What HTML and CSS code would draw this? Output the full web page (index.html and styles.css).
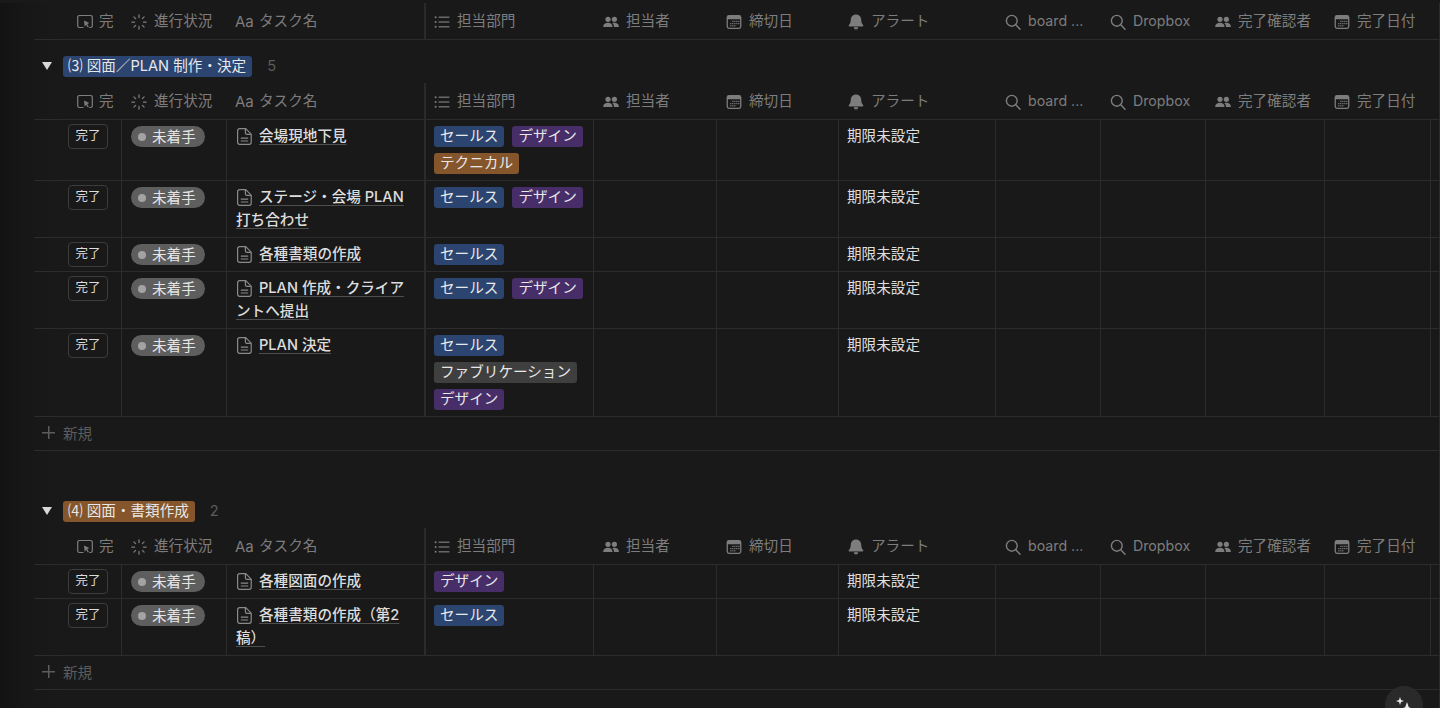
FILE: index.html
```html
<!DOCTYPE html>
<html lang="ja">
<head>
<meta charset="utf-8">
<title>タスク</title>
<link rel="stylesheet" href="styles.css">
</head>
<body>
<svg class="defs" width="0" height="0" aria-hidden="true">
  <symbol id="i-button" viewBox="0 0 16 16"><path d="M6.500 13.500H2.400A1.700 1.700 0 0 1 .7 11.800V3.200a1.700 1.700 0 0 1 1.700-1.700h11.200a1.700 1.700 0 0 1 1.700 1.700v8.600a1.700 1.700 0 0 1-1.700 1.700h-1.400" fill="none" stroke="currentColor" stroke-width="1.200"/><path d="M7 6.600l5.400 2.400-2.200 1 1.700 2.700-1.100.8-1.700-2.700-1.400 2z" fill="currentColor"/></symbol>
  <symbol id="i-status" viewBox="0 0 16 16"><g stroke="currentColor" stroke-width="1.250" stroke-linecap="round"><path d="M8 .8v2.800M8 12.400v2.800M.8 8h2.800M12.400 8h2.800M2.900 2.900l1.700 1.700M11.400 11.400l1.700 1.700M2.900 13.100l1.700-1.700M11.400 4.600l1.700-1.700"/></g></symbol>
  <symbol id="i-list" viewBox="0 0 16 16"><g fill="currentColor"><circle cx="1.600" cy="3.200" r="1"/><circle cx="1.600" cy="8" r="1"/><circle cx="1.600" cy="12.800" r="1"/><rect x="4.600" y="2.600" width="10.800" height="1.200"/><rect x="4.600" y="7.400" width="10.800" height="1.200"/><rect x="4.600" y="12.200" width="10.800" height="1.200"/></g></symbol>
  <symbol id="i-people" viewBox="0 0 16 16"><g fill="currentColor"><circle cx="5" cy="5.300" r="2.600"/><circle cx="11.400" cy="5.300" r="2.600"/><path d="M.2 12.400C.4 10 2.400 8.800 5 8.800s4.200 1.200 4.500 3.600c0 .4-.2.6-.6.6H.8c-.4 0-.6-.2-.6-.6z"/><path d="M10.600 13h4.700c.4 0 .6-.2.6-.6-.2-2.400-2-3.600-4.500-3.600-.8 0-1.500.1-2.100.4 1 .7 1.600 1.800 1.700 3.100 0 .3 0 .5-.4.700z"/></g></symbol>
  <symbol id="i-cal" viewBox="0 0 16 16"><path fill="currentColor" fill-rule="evenodd" d="M3 1h10a2.400 2.400 0 0 1 2.400 2.400v9.200A2.400 2.400 0 0 1 13 15H3a2.400 2.400 0 0 1-2.400-2.400V3.400A2.400 2.400 0 0 1 3 1zm-1.100 4.200v7.300c0 .7.500 1.200 1.200 1.200h9.800c.7 0 1.200-.5 1.200-1.200V5.200z"/><g fill="currentColor"><rect x="6.200" y="6.800" width="1.200" height="1.200"/><rect x="8.200" y="6.800" width="1.200" height="1.200"/><rect x="10.200" y="6.800" width="1.200" height="1.200"/><rect x="12.200" y="6.800" width="1.200" height="1.200"/><rect x="4.200" y="9" width="1.200" height="1.200"/><rect x="6.200" y="9" width="1.200" height="1.200"/><rect x="8.200" y="9" width="1.200" height="1.200"/><rect x="10.200" y="9" width="1.200" height="1.200"/><rect x="12.200" y="9" width="1.200" height="1.200"/><rect x="4.200" y="11.200" width="1.200" height="1.200"/><rect x="6.200" y="11.200" width="1.200" height="1.200"/><rect x="8.200" y="11.200" width="1.200" height="1.200"/></g></symbol>
  <symbol id="i-bell" viewBox="0 0 16 16"><path fill="currentColor" d="M8 .4c3 0 5.100 2.200 5.200 5.200.1 2.700.6 4.100 1.900 5.400.5.600.2 1.400-.6 1.400h-13c-.8 0-1.100-.8-.6-1.400C2.200 9.700 2.700 8.300 2.800 5.600 2.900 2.600 5 .4 8 .4z"/><path fill="currentColor" d="M5.800 13.200h4.400a2.200 2.200 0 0 1-4.400 0z"/></symbol>
  <symbol id="i-search" viewBox="0 0 16 16"><circle cx="6.800" cy="6.800" r="5.400" fill="none" stroke="currentColor" stroke-width="1.400"/><path d="M10.800 10.800l4.200 4.400" stroke="currentColor" stroke-width="1.500" stroke-linecap="round"/></symbol>
  <symbol id="i-doc" viewBox="0 0 15 17"><path d="M2.600.7h6.100l5.500 5.500v8.100a2 2 0 0 1-2 2H2.600a2 2 0 0 1-2-2V2.700a2 2 0 0 1 2-2z" fill="none" stroke="currentColor" stroke-width="1.200"/><path d="M8.400 1v3.700c0 1 .6 1.600 1.600 1.600h3.900M3.800 10.200h7.400M3.800 13h7.400" fill="none" stroke="currentColor" stroke-width="1.200"/></symbol>
</svg>

<main class="page">
  <div class="row head head-top">
    <div class="hc hc-first"><svg class="ic"><use href="#i-button"/></svg>完</div>
    <div class="hc"><svg class="ic"><use href="#i-status"/></svg>進行状況</div>
    <div class="hc hc-frozen"><span class="aa">Aa</span>タスク名</div>
    <div class="hc"><svg class="ic"><use href="#i-list"/></svg>担当部門</div>
    <div class="hc"><svg class="ic"><use href="#i-people"/></svg>担当者</div>
    <div class="hc"><svg class="ic"><use href="#i-cal"/></svg>締切日</div>
    <div class="hc"><svg class="ic"><use href="#i-bell"/></svg>アラート</div>
    <div class="hc"><svg class="ic"><use href="#i-search"/></svg><span class="lat">board ...</span></div>
    <div class="hc"><svg class="ic"><use href="#i-search"/></svg><span class="lat">Dropbox</span></div>
    <div class="hc"><svg class="ic"><use href="#i-people"/></svg>完了確認者</div>
    <div class="hc"><svg class="ic"><use href="#i-cal"/></svg>完了日付</div>
  </div>

  <section class="group">
    <div class="group-title"><span class="caret"></span><span class="gtag blue">⑶ 図面／PLAN 制作・決定</span><span class="count">5</span></div>
    <div class="row head">
      <div class="hc hc-first"><svg class="ic"><use href="#i-button"/></svg>完</div>
      <div class="hc"><svg class="ic"><use href="#i-status"/></svg>進行状況</div>
      <div class="hc hc-frozen"><span class="aa">Aa</span>タスク名</div>
      <div class="hc"><svg class="ic"><use href="#i-list"/></svg>担当部門</div>
      <div class="hc"><svg class="ic"><use href="#i-people"/></svg>担当者</div>
      <div class="hc"><svg class="ic"><use href="#i-cal"/></svg>締切日</div>
      <div class="hc"><svg class="ic"><use href="#i-bell"/></svg>アラート</div>
      <div class="hc"><svg class="ic"><use href="#i-search"/></svg><span class="lat">board ...</span></div>
      <div class="hc"><svg class="ic"><use href="#i-search"/></svg><span class="lat">Dropbox</span></div>
      <div class="hc"><svg class="ic"><use href="#i-people"/></svg>完了確認者</div>
      <div class="hc"><svg class="ic"><use href="#i-cal"/></svg>完了日付</div>
    </div>

    <div class="row">
      <div class="c c-btn"><span class="btn">完了</span></div>
      <div class="c"><span class="pill"><i class="dot"></i>未着手</span></div>
      <div class="c c-title"><svg class="doc"><use href="#i-doc"/></svg><span class="t">会場現地下見</span></div>
      <div class="c c-tags"><span class="tag blue">セールス</span><span class="tag purple">デザイン</span><span class="tag orange">テクニカル</span></div>
      <div class="c"></div><div class="c"></div>
      <div class="c c-alert">期限未設定</div>
      <div class="c"></div><div class="c"></div><div class="c"></div><div class="c"></div>
    </div>
    <div class="row">
      <div class="c c-btn"><span class="btn">完了</span></div>
      <div class="c"><span class="pill"><i class="dot"></i>未着手</span></div>
      <div class="c c-title"><svg class="doc"><use href="#i-doc"/></svg><span class="t">ステージ・会場 PLAN 打ち合わせ</span></div>
      <div class="c c-tags"><span class="tag blue">セールス</span><span class="tag purple">デザイン</span></div>
      <div class="c"></div><div class="c"></div>
      <div class="c c-alert">期限未設定</div>
      <div class="c"></div><div class="c"></div><div class="c"></div><div class="c"></div>
    </div>
    <div class="row">
      <div class="c c-btn"><span class="btn">完了</span></div>
      <div class="c"><span class="pill"><i class="dot"></i>未着手</span></div>
      <div class="c c-title"><svg class="doc"><use href="#i-doc"/></svg><span class="t">各種書類の作成</span></div>
      <div class="c c-tags"><span class="tag blue">セールス</span></div>
      <div class="c"></div><div class="c"></div>
      <div class="c c-alert">期限未設定</div>
      <div class="c"></div><div class="c"></div><div class="c"></div><div class="c"></div>
    </div>
    <div class="row">
      <div class="c c-btn"><span class="btn">完了</span></div>
      <div class="c"><span class="pill"><i class="dot"></i>未着手</span></div>
      <div class="c c-title"><svg class="doc"><use href="#i-doc"/></svg><span class="t">PLAN 作成・クライアントへ提出</span></div>
      <div class="c c-tags"><span class="tag blue">セールス</span><span class="tag purple">デザイン</span></div>
      <div class="c"></div><div class="c"></div>
      <div class="c c-alert">期限未設定</div>
      <div class="c"></div><div class="c"></div><div class="c"></div><div class="c"></div>
    </div>
    <div class="row">
      <div class="c c-btn"><span class="btn">完了</span></div>
      <div class="c"><span class="pill"><i class="dot"></i>未着手</span></div>
      <div class="c c-title"><svg class="doc"><use href="#i-doc"/></svg><span class="t">PLAN 決定</span></div>
      <div class="c c-tags"><span class="tag blue">セールス</span><span class="tag grey">ファブリケーション</span><span class="tag purple">デザイン</span></div>
      <div class="c"></div><div class="c"></div>
      <div class="c c-alert">期限未設定</div>
      <div class="c"></div><div class="c"></div><div class="c"></div><div class="c"></div>
    </div>
    <div class="new"><span class="plus"></span>新規</div>
  </section>

  <section class="group group-next">
    <div class="group-title"><span class="caret"></span><span class="gtag orange">⑷ 図面・書類作成</span><span class="count">2</span></div>
    <div class="row head">
      <div class="hc hc-first"><svg class="ic"><use href="#i-button"/></svg>完</div>
      <div class="hc"><svg class="ic"><use href="#i-status"/></svg>進行状況</div>
      <div class="hc hc-frozen"><span class="aa">Aa</span>タスク名</div>
      <div class="hc"><svg class="ic"><use href="#i-list"/></svg>担当部門</div>
      <div class="hc"><svg class="ic"><use href="#i-people"/></svg>担当者</div>
      <div class="hc"><svg class="ic"><use href="#i-cal"/></svg>締切日</div>
      <div class="hc"><svg class="ic"><use href="#i-bell"/></svg>アラート</div>
      <div class="hc"><svg class="ic"><use href="#i-search"/></svg><span class="lat">board ...</span></div>
      <div class="hc"><svg class="ic"><use href="#i-search"/></svg><span class="lat">Dropbox</span></div>
      <div class="hc"><svg class="ic"><use href="#i-people"/></svg>完了確認者</div>
      <div class="hc"><svg class="ic"><use href="#i-cal"/></svg>完了日付</div>
    </div>
    <div class="row">
      <div class="c c-btn"><span class="btn">完了</span></div>
      <div class="c"><span class="pill"><i class="dot"></i>未着手</span></div>
      <div class="c c-title"><svg class="doc"><use href="#i-doc"/></svg><span class="t">各種図面の作成</span></div>
      <div class="c c-tags"><span class="tag purple">デザイン</span></div>
      <div class="c"></div><div class="c"></div>
      <div class="c c-alert">期限未設定</div>
      <div class="c"></div><div class="c"></div><div class="c"></div><div class="c"></div>
    </div>
    <div class="row">
      <div class="c c-btn"><span class="btn">完了</span></div>
      <div class="c"><span class="pill"><i class="dot"></i>未着手</span></div>
      <div class="c c-title"><svg class="doc"><use href="#i-doc"/></svg><span class="t">各種書類の作成（第2稿）</span></div>
      <div class="c c-tags"><span class="tag blue">セールス</span></div>
      <div class="c"></div><div class="c"></div>
      <div class="c c-alert">期限未設定</div>
      <div class="c"></div><div class="c"></div><div class="c"></div><div class="c"></div>
    </div>
    <div class="new"><span class="plus"></span>新規</div>
  </section>
</main>

<button class="ai" type="button" aria-label="AI">
  <svg viewBox="0 0 24 24" width="24" height="24"><path fill="#ececec" d="M8 4l1 3 3 1-3 1-1 3-1-3-3-1 3-1zM15 9l1.800 5.200L22 16l-5.200 1.800L15 23l-1.800-5.200L8 16l5.200-1.800z"/></svg>
</button>
</body>
</html>
```

FILE: styles.css
```css
* { box-sizing: border-box; }
html, body { margin: 0; height: 100%; overflow: hidden; }
body {
  background: #191919;
  color: #e3e3e3;
  font-family: Inter, "Noto Sans CJK JP", sans-serif;
  font-size: 14.6px;
}
.defs { position: absolute; }
.page {
  height: 708px;
  padding-left: 34px;
  background: linear-gradient(90deg, #131313 0, #171717 24px, #191919 60px);
  border-right: 1px solid #2b2b2b;
}
.row {
  display: grid;
  grid-template-columns: 88px 105px 198px 169px 123px 122px 157px 105px 105px 119px 106px 1fr;
  border-bottom: 1px solid #2c2c2c;
}
.head {
  height: 37px;
  color: #7d7d7d;
}
.head-top { margin-top: 3px; }
.hc {
  display: flex;
  align-items: center;
  padding: 1px 0 0 9px;
  white-space: nowrap;
  line-height: 1;
}
.hc-first { padding-left: 43px; }
.hc-first .ic { margin-right: 6px; }
.hc-frozen { border-right: 1px solid #2a2a2a; box-shadow: 1px 0 0 #2a2a2a; padding-left: 8px; }
.lat { font-size: 14.2px; }
.ic {
  width: 16px;
  height: 16px;
  margin-right: 7px;
  flex: none;
  color: #7d7d7d;
}
.aa {
  width: 17px;
  margin-right: 7px;
  font-size: 15px;
}
.group-title {
  height: 43px;
  padding-top: 16px;
  display: flex;
  align-items: flex-start;
}
.group-next { margin-top: 34px; }
.caret {
  width: 0;
  height: 0;
  margin: 6px 11px 0 8px;
  border-left: 5px solid transparent;
  border-right: 5px solid transparent;
  border-top: 8px solid #d8d8d8;
}
.gtag {
  height: 21px;
  line-height: 20px;
  padding: 0 6px 0 5px;
  border-radius: 3px;
  color: #e8e8e8;
  font-size: 14.6px;
  white-space: nowrap;
}
.count { margin: 0 0 0 15px; color: #5c5c5c; line-height: 20px; }
.blue { background: #2b4470; }
.purple { background: #472e68; }
.orange { background: #85562b; }
.grey { background: #3f3f3f; }
.c {
  border-right: 1px solid #2c2c2c;
  padding: 6px 9px;
  min-width: 0;
}
.row .c:nth-child(3) { box-shadow: 1px 0 0 #2a2a2a; padding-right: 16px; }
.c-btn { padding: 4px 13px 0 0; display: flex; justify-content: flex-end; align-items: flex-start; }
.btn {
  width: 40px;
  height: 25px;
  border: 1px solid #3c3c3c;
  border-radius: 4px;
  text-align: center;
  line-height: 22px;
  font-size: 12.5px;
  color: #dcdcdc;
}
.pill {
  display: inline-flex;
  align-items: center;
  width: 74px;
  height: 21px;
  line-height: 20px;
  border-radius: 11px;
  background: #5e5e5e;
  padding-left: 7px;
  color: #e6e6e6;
  white-space: nowrap;
}
.dot {
  width: 8px;
  height: 8px;
  margin-right: 6px;
  border-radius: 50%;
  background: #a3a3a3;
}
.c-title { line-height: 23px; padding: 5px 16px 5px 9px; font-weight: 500; color: #dddddd; }
.doc {
  width: 15px;
  height: 17px;
  margin: 0 7px 0 1px;
  vertical-align: -4px;
  color: #8a8a8a;
}
.t {
  text-decoration: underline;
  text-decoration-color: #4e4e4e;
  text-decoration-thickness: 1px;
  text-underline-offset: 3px;
  text-decoration-skip-ink: none;
}
.c-tags {
  display: flex;
  flex-wrap: wrap;
  align-content: flex-start;
  gap: 6px 8px;
}
.tag {
  height: 21px;
  line-height: 20px;
  padding: 0 6px;
  border-radius: 3px;
  font-size: 14.6px;
  color: #e8e8e8;
  white-space: nowrap;
}
.c-alert { line-height: 21px; padding-left: 8px; color: #dedede; }
.new {
  height: 34px;
  display: flex;
  align-items: center;
  border-bottom: 1px solid #2c2c2c;
  color: #5c5c5c;
  padding: 0 0 2px 8px;
}
.plus {
  width: 13px;
  height: 13px;
  margin-right: 8px;
  background:
    linear-gradient(#5c5c5c, #5c5c5c) center / 13px 1.500px no-repeat,
    linear-gradient(#5c5c5c, #5c5c5c) center / 1.500px 13px no-repeat;
}
.ai {
  position: fixed;
  left: 1385px;
  top: 686px;
  width: 38px;
  height: 38px;
  padding: 7px;
  border: 0;
  border-radius: 50%;
  background: #2a2a2a;
}
```
